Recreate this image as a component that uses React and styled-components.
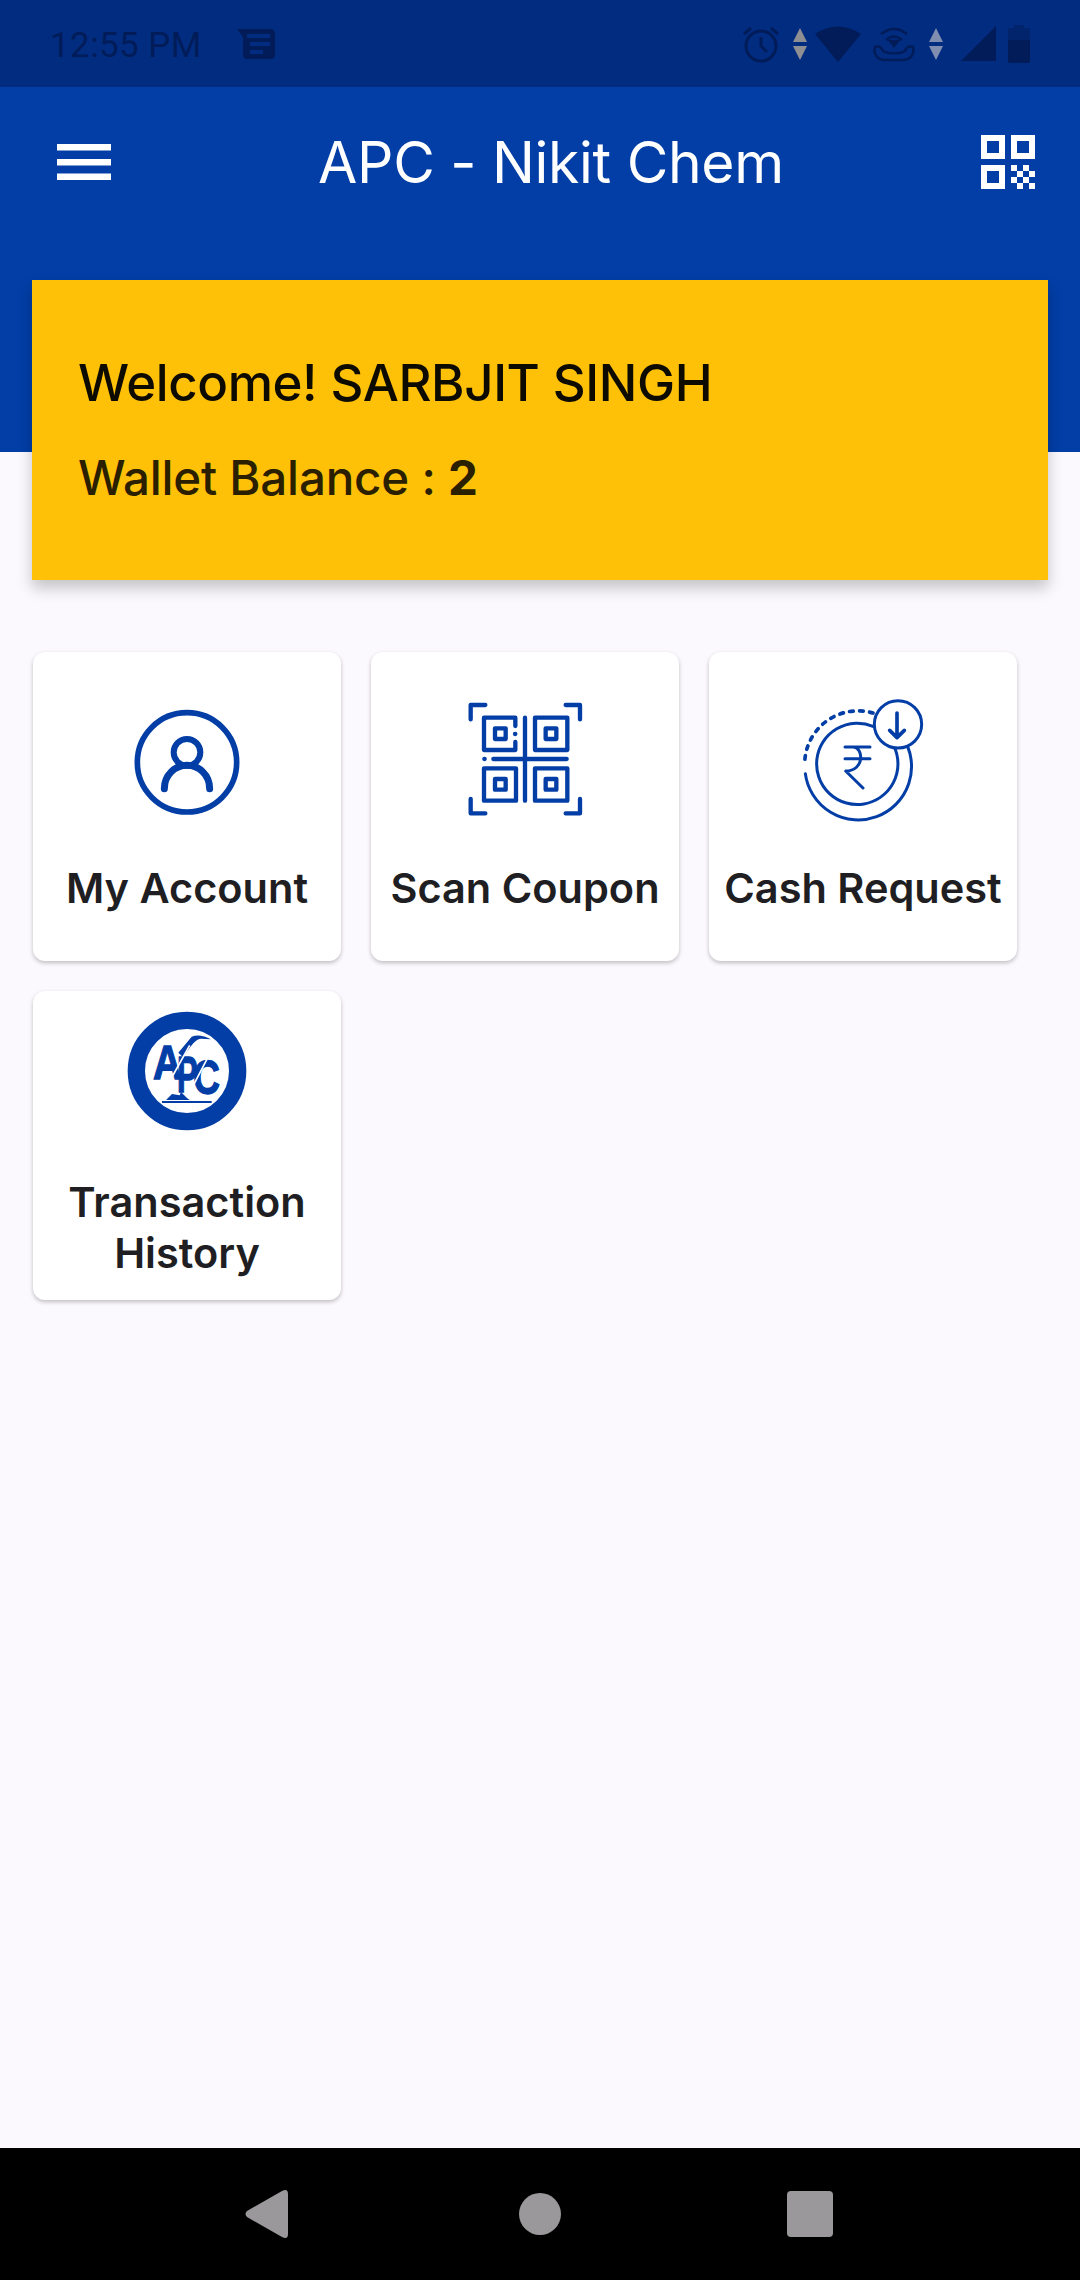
import React from 'react'
import styled, { createGlobalStyle } from 'styled-components'

const BLUE = '#023ea6'

const GlobalStyle = createGlobalStyle`
  html, body {
    margin: 0;
    padding: 0;
    background: #fbf9fd;
  }
  * {
    box-sizing: border-box;
  }
`

const Screen = styled.div`
  width: 1080px;
  height: 2280px;
  display: flex;
  flex-direction: column;
  overflow: hidden;
  background: #fbf9fd;
  font-family: Inter, "Liberation Sans", sans-serif;
`

const StatusBar = styled.div`
  height: 87px;
  flex: none;
  background: #012c80;
  display: flex;
  align-items: center;
  padding: 0 50px 0 50px;
  color: #011c58;
`

const Time = styled.span`
  font-family: Roboto, sans-serif;
  font-size: 35px;
  letter-spacing: 0.4px;
  width: 187px;
  padding-top: 4px;
`

const Spacer = styled.div`
  flex: 1;
`

const StatusIcons = styled.div`
  display: flex;
  align-items: center;
`

const Header = styled.header`
  height: 365px;
  flex: none;
  background: ${BLUE};
  display: flex;
  align-items: flex-start;
  justify-content: space-between;
  padding: 48px 45px 0 57px;
`

const Title = styled.h1`
  margin: 0 0 0 10px;
  font-size: 57px;
  line-height: 56px;
  font-weight: 400;
  color: #fff;
  letter-spacing: -0.3px;
`

const MenuIcon = styled.svg`
  margin-top: 9px;
  display: block;
`

const QrIcon = styled.svg`
  display: block;
`

const WelcomeCard = styled.section`
  flex: none;
  width: 1016px;
  height: 300px;
  margin: -172px 0 0 32px;
  padding: 71px 46px 0;
  background: #ffc107;
  box-shadow: 0 8px 14px rgba(0, 0, 0, 0.22);
`

const Welcome = styled.div`
  font-size: 51px;
  line-height: 64px;
  font-weight: 500;
  color: #0d0a00;
  letter-spacing: -0.4px;
`

const Wallet = styled.div`
  margin-top: 33px;
  font-size: 47.5px;
  line-height: 60px;
  font-weight: 500;
  color: #2a2000;
  letter-spacing: -0.2px;
`

const Amount = styled.b`
  font-weight: 700;
`

const Main = styled.main`
  flex: 1;
  padding: 72px 0 0 33px;
  display: grid;
  grid-template-columns: repeat(3, 308px);
  grid-auto-rows: 309px;
  column-gap: 30px;
  row-gap: 30px;
  align-content: start;
`

const Tile = styled.div`
  background: #fff;
  border-radius: 12px;
  box-shadow: 0 2px 4px rgba(0, 0, 0, 0.24);
  display: flex;
  flex-direction: column;
  align-items: center;
  justify-content: center;
  padding-top: 3px;
`

const TileIcon = styled.svg`
  display: block;
  flex: none;
  overflow: visible;
`

const TileLabel = styled.div`
  margin-top: 41px;
  width: 100%;
  text-align: center;
  font-size: 41.5px;
  line-height: 51px;
  font-weight: 600;
  color: #1f1f23;
`

const NavBar = styled.nav`
  height: 132px;
  flex: none;
  background: #000;
  display: flex;
  align-items: center;
  padding: 0 0 0 245px;
`

const NavIcon = styled.svg`
  display: block;
  margin-right: ${(props) => props.$gap}px;
`

// tile icons are drawn in 360 unit boxes, 3 units to a pixel
function AccountIcon() {
  return (
    <TileIcon width="120" height="120" viewBox="318 186 360 360" fill="none" stroke={BLUE} strokeLinecap="round">
      <circle cx="498" cy="367" r="149" strokeWidth="17" />
      <circle cx="498" cy="337" r="40" strokeWidth="18" />
      <path d="M430 446 C430 405 462 376 498 376 C534 376 566 405 566 446" strokeWidth="21" />
    </TileIcon>
  )
}

function ScanIcon() {
  const square = (x, y) => <rect key={`${x}-${y}`} x={x} y={y} width="32" height="32" />
  return (
    <TileIcon width="120" height="120" viewBox="315 186 360 360" fill="none" stroke={BLUE} strokeWidth="13" strokeLinecap="round" strokeLinejoin="round">
      <path d="M332 238 V195 H376 M617 195 H660 V238 M332 477 V520 H376 M617 520 H660 V477" />
      <path d="M466 258 V233 H372 V330 H466 V306" />
      <rect x="525" y="233" width="97" height="97" />
      <rect x="372" y="385" width="96" height="97" />
      <rect x="525" y="385" width="97" height="97" />
      {square(405, 265)}
      {square(557, 265)}
      {square(405, 417)}
      {square(557, 417)}
      <path d="M495 233 V482 M400 357 H620 M373 357 H374 M465 282 H466" />
    </TileIcon>
  )
}

function CashIcon() {
  return (
    <TileIcon width="120" height="120" viewBox="340 185 360 360" fill="none" stroke={BLUE} strokeWidth="9" strokeLinecap="round" strokeLinejoin="round">
      <path d="M550 218 A160 160 0 0 0 345 372" strokeDasharray="11 19" strokeWidth="11" />
      <path d="M347 400 A160 160 0 1 0 640 292" />
      <path d="M550 258 A122 122 0 1 0 613 318" />
      <circle cx="625" cy="252" r="71" fill="#fff" />
      <path d="M622 218 V292 M600 270 L622 292 L644 270" strokeWidth="11" />
      <path d="M466 320 H541 M466 355 H541 M490 320 C522 320 526 392 468 392 L520 443" />
    </TileIcon>
  )
}

const LogoLetter = styled.text`
  font-family: "Liberation Sans", sans-serif;
  font-weight: 700;
  fill: ${BLUE};
  stroke: ${BLUE};
  stroke-width: 4px;
`

function LogoIcon() {
  return (
    <TileIcon width="120" height="120" viewBox="78 80 360 360">
      <circle cx="258" cy="245" r="152" fill="#fff" stroke={BLUE} strokeWidth="52" />
      <LogoLetter x="156" y="268" fontSize="146" textLength="86" lengthAdjust="spacingAndGlyphs">A</LogoLetter>
      <LogoLetter x="228" y="308" fontSize="148" textLength="62" lengthAdjust="spacingAndGlyphs">P</LogoLetter>
      <LogoLetter x="277" y="315" fontSize="142" textLength="80" lengthAdjust="spacingAndGlyphs">C</LogoLetter>
      <path d="M232 190 L272 142 C290 134 310 140 330 150 L300 148 C285 148 270 168 246 204 Z" fill={BLUE} />
      <path d="M208 272 L266 168 M272 298 L328 190" stroke="#fff" strokeWidth="5" />
      <path d="M183 338 H332" stroke={BLUE} strokeWidth="6" />
      <path d="M195 332 L213 314 L236 318 L240 308 L258 326 L266 332 Z" fill={BLUE} />
    </TileIcon>
  )
}

const tiles = [
  { label: 'My Account', icon: <AccountIcon /> },
  { label: 'Scan Coupon', icon: <ScanIcon /> },
  { label: 'Cash Request', icon: <CashIcon /> },
  { label: <>Transaction<br />History</>, icon: <LogoIcon /> },
]

function App() {
  return (
    <Screen>
      <GlobalStyle />
      <StatusBar>
        <Time>12:55 PM</Time>
        <svg width="38" height="30" viewBox="0 0 38 30" fill="#011c58">
          <path d="M0 0 H33 Q38 0 38 5 V26 Q38 30 34 30 H10 Q6 30 6 26 V8 Z" />
          <path d="M10 5 H33 V9 H10 Z M13 13 H33 V17 H13 Z M13 21 H26 V25 H13 Z" fill="#012c80" />
        </svg>
        <Spacer />
        <StatusIcons>
          <svg width="38" height="38" viewBox="0 0 38 38" fill="none" stroke="#011c58" strokeWidth="3">
            <circle cx="19" cy="21" r="15" />
            <path d="M19 12 V21 L25 27 M2 9 L9 3 M36 9 L29 3" />
          </svg>
          <svg width="14" height="32" viewBox="0 0 14 32" style={{ marginLeft: 13 }}>
            <path d="M7 0 L14 14 H0 Z M0 18 H14 L7 32 Z" fill="#8e8f93" />
          </svg>
          <svg width="46" height="37" viewBox="0 0 46 37" style={{ marginLeft: 8 }}>
            <path d="M0 9 Q23 -6 46 9 L23 37 Z" fill="#011c58" />
          </svg>
          <svg width="42" height="37" viewBox="0 0 42 37" style={{ marginLeft: 12 }} fill="none" stroke="#011c58" strokeWidth="2.5">
            <path d="M8 9 Q21 -1 34 9 M13 15 Q21 8 29 15" />
            <path d="M17 16 H25 L21 21 Z" fill="#011c58" />
            <path d="M2 22 C8 20 9 24 10 26 C14 29 28 29 32 26 C33 24 34 20 40 22 C42 28 38 35 30 35 H12 C4 35 0 28 2 22 Z" />
          </svg>
          <svg width="14" height="32" viewBox="0 0 14 32" style={{ marginLeft: 14 }}>
            <path d="M7 0 L14 14 H0 Z M0 18 H14 L7 32 Z" fill="#7f8db0" />
          </svg>
          <svg width="35" height="35" viewBox="0 0 35 35" style={{ marginLeft: 18 }}>
            <path d="M35 0 V35 H0 Z" fill="#011c58" />
          </svg>
          <svg width="22" height="38" viewBox="0 0 22 38" style={{ marginLeft: 12 }}>
            <path d="M6 0 H16 V3 H22 V15 H0 V3 H6 Z" fill="#01246c" />
            <path d="M0 15 H22 V36 Q22 38 20 38 H2 Q0 38 0 36 Z" fill="#011c58" />
          </svg>
        </StatusIcons>
      </StatusBar>

      <Header>
        <MenuIcon width="54" height="36" viewBox="0 0 54 36" fill="#fff">
          <rect width="54" height="6.5" />
          <rect y="15" width="54" height="6.5" />
          <rect y="29.5" width="54" height="6.5" />
        </MenuIcon>
        <Title>APC - Nikit Chem</Title>
        <QrIcon width="54" height="54" viewBox="0 0 54 54" fill="#fff">
          <path fillRule="evenodd" d="M0 0 H24 V24 H0 Z M6 6 V18 H18 V6 Z" />
          <path fillRule="evenodd" d="M30 0 H54 V24 H30 Z M36 6 V18 H48 V6 Z" />
          <path fillRule="evenodd" d="M0 30 H24 V54 H0 Z M6 36 V48 H18 V36 Z" />
          <path d="M30 30 H36 V36 H30 Z M42 30 H48 V36 H42 Z M36 36 H42 V42 H36 Z M48 36 H54 V42 H48 Z M30 42 H36 V48 H30 Z M42 42 H48 V48 H42 Z M36 48 H42 V54 H36 Z M48 48 H54 V54 H48 Z" />
        </QrIcon>
      </Header>

      <WelcomeCard>
        <Welcome>Welcome! SARBJIT SINGH</Welcome>
        <Wallet>Wallet Balance : <Amount>2</Amount></Wallet>
      </WelcomeCard>

      <Main>
        {tiles.map((tile, i) => (
          <Tile key={i}>
            {tile.icon}
            <TileLabel>{tile.label}</TileLabel>
          </Tile>
        ))}
      </Main>

      <NavBar>
        <NavIcon $gap={231} width="43" height="48" viewBox="0 0 43 48">
          <path d="M37 1 Q43 -2 43 4 V44 Q43 50 37 47 L2 27 Q-1 24 2 21 Z" fill="#9a989a" />
        </NavIcon>
        <NavIcon $gap={226} width="42" height="42" viewBox="0 0 42 42">
          <circle cx="21" cy="21" r="21" fill="#9a989a" />
        </NavIcon>
        <NavIcon $gap={0} width="46" height="46" viewBox="0 0 46 46">
          <rect width="46" height="46" rx="4" fill="#9a989a" />
        </NavIcon>
      </NavBar>
    </Screen>
  )
}

export default App
